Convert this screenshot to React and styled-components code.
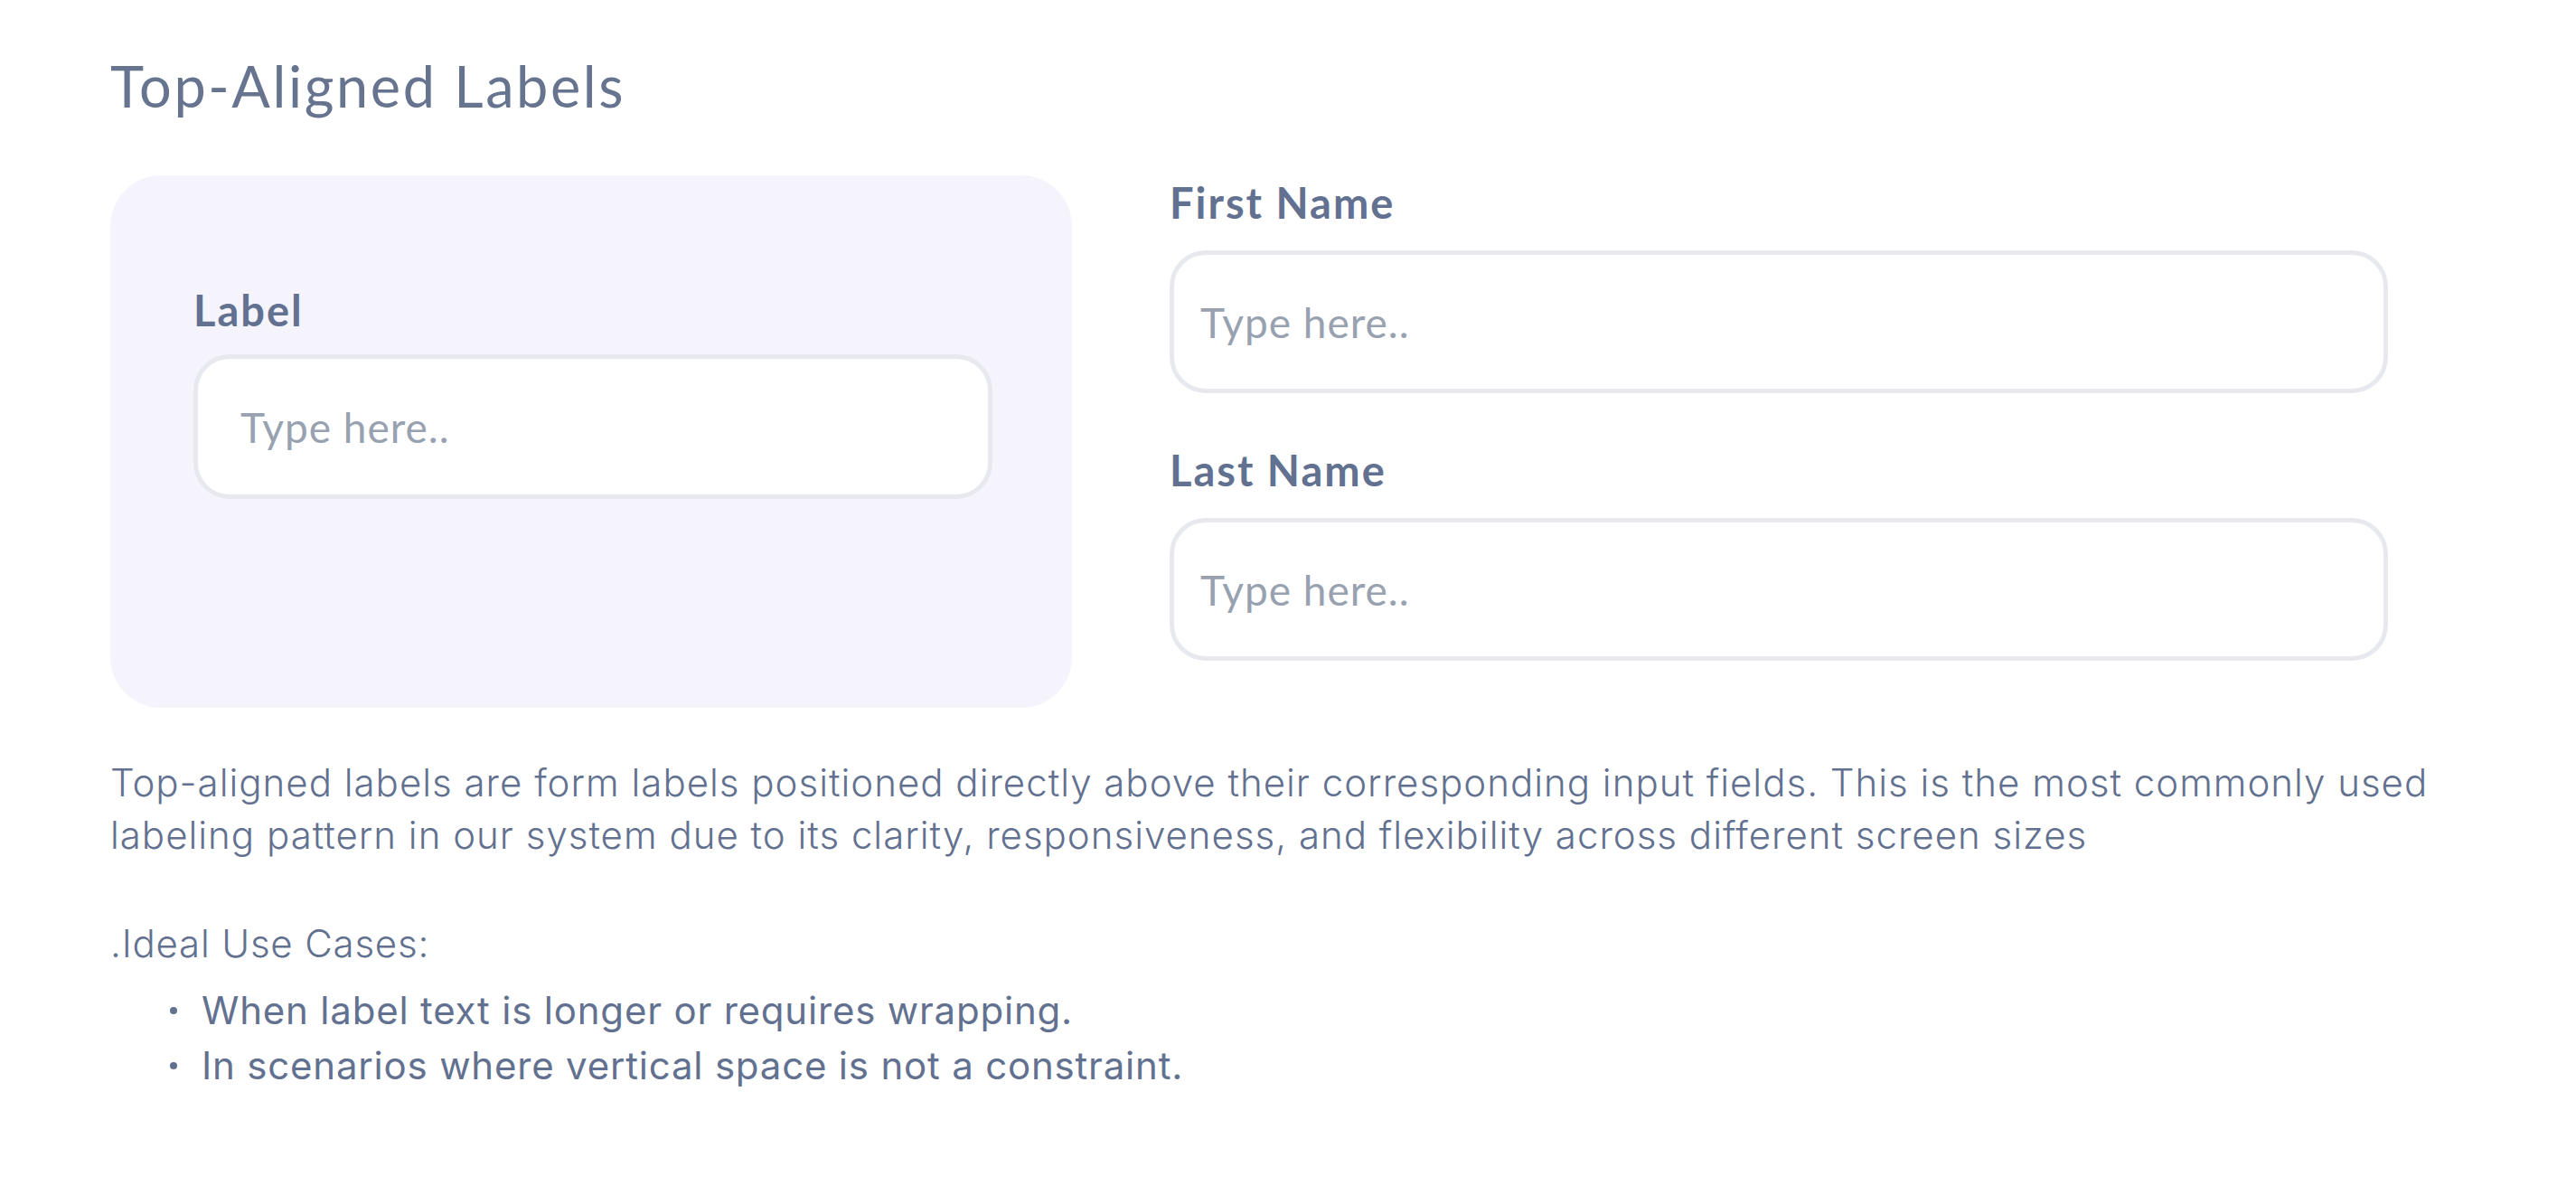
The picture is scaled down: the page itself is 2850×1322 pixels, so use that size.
import styled, { createGlobalStyle } from "styled-components"

const GlobalStyle = createGlobalStyle`
    body {
        margin: 0;
        background: #fff;
        font-family: "Lato", "Open Sans", sans-serif;
        color: #637190;
    }
`

const Page = styled.main`
    padding: 58px 122px 60px;
`

const Heading = styled.h2`
    margin: 0;
    font-family: "Lato", sans-serif;
    font-size: 63px;
    line-height: 74px;
    letter-spacing: 2.6px;
    font-weight: 400;
    color: #66748f;
`

const Demo = styled.section`
    display: flex;
    align-items: flex-start;
    gap: 108px;
    margin-top: 62px;
`

const Card = styled.div`
    width: 1064px;
    height: 589px;
    box-sizing: border-box;
    padding: 121px 88px 0 92px;
    background-color: #f5f4fd;
    border-radius: 56px;
    flex-shrink: 0;
`

const Fields = styled.div`
    width: 1348px;
    display: flex;
    flex-direction: column;
`

const Field = styled.div`
    display: flex;
    flex-direction: column;
    margin-top: ${p => p.$top || 0}px;
`

const Label = styled.label`
    font-family: "Lato", sans-serif;
    font-weight: 700;
    font-size: 47px;
    line-height: 56px;
    letter-spacing: 2px;
    color: #637190;
    margin-top: ${p => p.$offset || 0}px;
    margin-bottom: ${p => p.$gap || 25}px;
`

const Input = styled.input`
    box-sizing: border-box;
    width: 100%;
    height: ${p => p.$height || 158}px;
    padding: 0 0 0 ${p => p.$pad || 29}px;
    border: 5px solid #e8e9ee;
    border-radius: 40px;
    background: #fff;
    font-family: "Lato", sans-serif;
    font-size: 46px;
    letter-spacing: 1px;
    color: #637190;
    outline: none;

    &::placeholder {
        color: #98a1b0;
    }
`

const Description = styled.p`
    margin: 54px 0 0;
    font-family: "Inter", sans-serif;
    font-weight: 300;
    font-size: 42px;
    line-height: 58px;
    letter-spacing: 1px;
    color: #637190;
`

const SubHeading = styled.p`
    margin: 62px 0 0;
    font-family: "Inter", sans-serif;
    font-weight: 300;
    font-size: 42px;
    line-height: 58px;
    letter-spacing: 0.8px;
    color: #637190;
`

const List = styled.ul`
    list-style: none;
    margin: 14px 0 0;
    padding: 0 0 0 66px;
`

const Item = styled.li`
    display: flex;
    align-items: center;
    gap: 27px;
    font-family: "Inter", sans-serif;
    font-weight: 400;
    font-size: 42px;
    line-height: 61px;
    letter-spacing: 0.8px;
    color: #637190;

    &::before {
        content: "";
        width: 8px;
        height: 8px;
        border-radius: 50%;
        background-color: #637190;
        flex-shrink: 0;
    }
`

const App = () => {
  return (
    <>
      <GlobalStyle />
      <Page>
        <Heading>Top-Aligned Labels</Heading>
        <Demo>
          <Card>
            <Field>
              <Label $gap={21}>Label</Label>
              <Input $height={160} $pad={47} placeholder="Type here.." />
            </Field>
          </Card>
          <Fields>
            <Field>
              <Label $offset={2}>First Name</Label>
              <Input placeholder="Type here.." />
            </Field>
            <Field $top={57}>
              <Label>Last Name</Label>
              <Input placeholder="Type here.." />
            </Field>
          </Fields>
        </Demo>
        <Description>
          Top-aligned labels are form labels positioned directly above their corresponding input fields. This is the most commonly used labeling pattern in our system due to its clarity, responsiveness, and flexibility across different screen sizes
        </Description>
        <SubHeading>.Ideal Use Cases:</SubHeading>
        <List>
          <Item>When label text is longer or requires wrapping.</Item>
          <Item>In scenarios where vertical space is not a constraint.</Item>
        </List>
      </Page>
    </>
  )
}

export default App
